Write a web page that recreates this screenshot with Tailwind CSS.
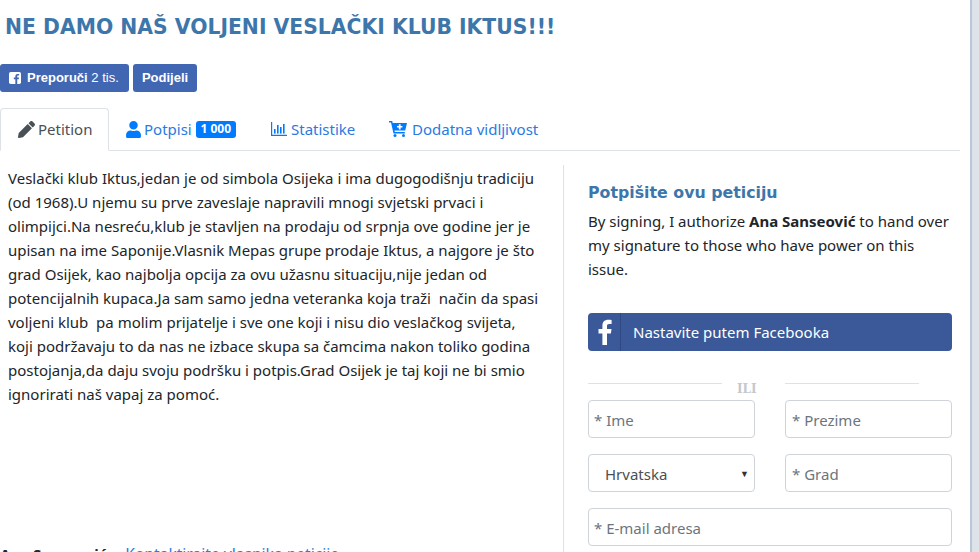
<!DOCTYPE html>
<html lang="hr">
<head>
    <meta charset="UTF-8">
    <meta name="viewport" content="width=device-width, initial-scale=1.0">
    <title>Ne damo naš voljeni veslački klub Iktus</title>
    <script src="https://cdn.jsdelivr.net/npm/@tailwindcss/browser@4"></script>
</head>
<body class="bg-white text-[#212529] font-['Noto_Sans',sans-serif] text-[15px] h-[552px] overflow-hidden flex">
    <div class="w-[972px] h-[552px] overflow-hidden border-r-2 border-[#b8c8d6] shrink-0">
        <h1 class="pt-[14px] pl-[5px] h-[64px] font-['DejaVu_Sans',sans-serif] font-bold text-[20.35px] leading-[26px] text-[#3d76aa]">NE DAMO NAŠ VOLJENI VESLAČKI KLUB IKTUS!!!</h1>

        <div class="flex gap-[4px] h-[28px]">
            <a class="flex items-center gap-[6px] w-[129px] pl-[9px] rounded-[3px] bg-[#4267b2] text-white font-['Liberation_Sans',sans-serif] text-[13px] font-bold">
                <svg class="w-[12px] h-[12px]" viewBox="0 0 14 14"><rect x="0" y="0" width="14" height="14" rx="2" fill="#fff"/><path d="M9.6 14V8.6h1.8l.3-2.1H9.6V5.2c0-.6.2-1 1-1h1.2V2.3c-.3 0-.9-.1-1.700-.1-1.600 0-2.700 1-2.700 2.800v1.500H5.600v2.100h1.800V14z" fill="#4267b2"/></svg>
                <span>Preporuči <span class="font-normal">2 tis.</span></span>
            </a>
            <a class="flex items-center justify-center w-[64px] rounded-[3px] bg-[#4267b2] text-white font-['Liberation_Sans',sans-serif] text-[13px] font-bold">Podijeli</a>
        </div>

        <div class="flex mt-[16px] h-[43px] w-[960px] border-b border-[#dee2e6] text-[15px]">
            <a class="flex items-center gap-[3px] w-[109px] h-[43px] pl-[17px] border border-[#dee2e6] border-b-white rounded-t-[4px] text-[#495057]">
                <svg class="w-[17px] h-[17px]" viewBox="0 0 512 512" fill="#495057"><path d="M497.900 142.100l-46.100 46.100c-4.700 4.700-12.300 4.700-17 0l-111-111c-4.700-4.700-4.700-12.300 0-17l46.100-46.100c18.700-18.700 49.100-18.700 67.900 0l60.100 60.100c18.800 18.700 18.800 49.100 0 67.900zM284.200 99.800L21.600 362.400.4 483.900c-2.900 16.400 11.400 30.600 27.800 27.800l121.500-21.300 262.600-262.600c4.700-4.700 4.700-12.300 0-17l-111-111c-4.800-4.700-12.400-4.700-17.100 0z"/></svg>
                <span>Petition</span>
            </a>
            <a class="flex items-center gap-[4px] pl-[17px] w-[145px] text-[#2a7ae2]">
                <svg class="w-[15px] h-[17px] -mr-[1px]" viewBox="0 0 448 512" fill="#007bff"><path d="M224 256c70.700 0 128-57.300 128-128S294.700 0 224 0 96 57.300 96 128s57.300 128 128 128zm89.600 32h-16.700c-22.200 10.200-46.900 16-72.900 16s-50.600-5.800-72.900-16h-16.700C60.200 288 0 348.200 0 422.400V464c0 26.500 21.500 48 48 48h352c26.500 0 48-21.500 48-48v-41.600c0-74.200-60.200-134.400-134.400-134.400z"/></svg>
                <span>Potpisi</span>
                <span class="h-[17px] w-[40px] flex items-center justify-center rounded-[3px] bg-[#007bff] text-white text-[12px] font-bold">1 000</span>
            </a>
            <a class="flex items-center gap-[4px] pl-[17px] w-[119px] text-[#2a7ae2]">
                <svg class="w-[16px] h-[14px]" viewBox="0 0 16 14" fill="#007bff"><path d="M0 0h1.200v12.800H16V14H0z"/><rect x="3" y="7" width="1.600" height="4.600"/><rect x="6" y="3" width="1.600" height="8.600"/><rect x="9" y="5" width="1.600" height="6.600"/><rect x="12" y="2" width="1.600" height="9.600"/></svg>
                <span>Statistike</span>
            </a>
            <a class="flex items-center gap-[5px] pl-[16px] text-[#2a7ae2]">
                <svg class="w-[18px] h-[16px]" viewBox="0 0 18 16" fill="#007bff"><path d="M0 0h3.200l.5 2H18l-1.800 7.500H5.500l.3 1.500h10v1.600H4.500L2 1.600H0z"/><circle cx="6" cy="14.500" r="1.500"/><circle cx="14.500" cy="14.500" r="1.500"/><path d="M9.800 3.200h1.800v1.800h1.800v1.600h-1.800v1.800H9.800V6.600H8V5h1.800z" fill="#fff"/></svg>
                <span>Dodatna vidljivost</span>
            </a>
        </div>

        <div class="flex mt-[14px] h-[387px]">
            <div class="w-[563px] shrink-0 pt-[1px] flex flex-col">
                <p class="pl-[8px] w-[550px] leading-[24px] text-[15px] whitespace-pre-wrap">Veslački klub Iktus,jedan je od simbola Osijeka i ima dugogodišnju tradiciju
(od 1968).U njemu su prve zaveslaje napravili mnogi svjetski prvaci i
olimpijci.Na nesreću,klub je stavljen na prodaju od srpnja ove godine jer je
upisan na ime Saponije.Vlasnik Mepas grupe prodaje Iktus, a najgore je što
grad Osijek, kao najbolja opcija za ovu užasnu situaciju,nije jedan od
potencijalnih kupaca.Ja sam samo jedna veteranka koja traži  način da spasi
voljeni klub  pa molim prijatelje i sve one koji i nisu dio veslačkog svijeta,
koji podržavaju to da nas ne izbace skupa sa čamcima nakon toliko godina
postojanja,da daju svoju podršku i potpis.Grad Osijek je taj koji ne bi smio
ignorirati naš vapaj za pomoć.</p>
                <p class="mt-[136px] whitespace-nowrap leading-[24px]"><b>Ana Sanseović</b> <a class="ml-[15px] text-[15.6px] text-[#2a7ae2]">Kontaktirajte vlasnika peticije</a></p>
            </div>
            <div class="w-[397px] border-l border-[#dee2e6] pt-[15px] pl-[24px] pr-[8px]">
                <h2 class="font-['DejaVu_Sans',sans-serif] font-bold text-[15.8px] leading-[26px] text-[#3d76aa]">Potpišite ovu peticiju</h2>
                <p class="mt-[3px] leading-[24px] text-[15px]">By signing, I authorize <b>Ana Sanseović</b> to hand over my signature to those who have power on this issue.</p>
                <a class="mt-[32px] flex h-[38px] rounded-[4px] bg-[#3b5998] text-white">
                    <span class="w-[33px] flex items-center justify-center border-r border-[#2f4a82]">
                        <svg class="w-[15px] h-[26px]" viewBox="0 0 15 26" fill="#fff"><path d="M10 26V14.500h3.900l.6-4.500H10V7.200c0-1.300.4-2.200 2.200-2.200h2.400V1c-.4-.1-1.800-.2-3.400-.2C7.800.8 5.400 2.900 5.400 6.700V10H1.500v4.500h3.900V26z"/></svg>
                    </span>
                    <span class="pl-[12px] flex items-center text-[15px]">Nastavite putem Facebooka</span>
                </a>
                <div class="mt-[32px] flex h-[17px] w-[331px]">
                    <span class="w-[134px] h-px bg-[#dee2e6]"></span>
                    <span class="w-[63px] -mt-[2px] pl-[15px] text-left font-['DejaVu_Serif',serif] font-bold text-[12px] leading-[16px] text-[#c4c8cc]">ILI</span>
                    <span class="w-[134px] h-px bg-[#dee2e6]"></span>
                </div>
                <div class="grid grid-cols-2 gap-x-[30px] gap-y-[16px]">
                    <div class="h-[38px] flex items-center pt-[2px] pl-[5px] border border-[#ced4da] rounded-[4px] text-[#6c757d]">* Ime</div>
                    <div class="h-[38px] flex items-center pt-[2px] pl-[6px] border border-[#ced4da] rounded-[4px] text-[#6c757d]">* Prezime</div>
                    <div class="h-[38px] flex items-center justify-between pt-[2px] pl-[16px] pr-[5px] border border-[#ced4da] rounded-[4px] text-[#495057]"><span>Hrvatska</span><span class="text-[9px] text-[#333]">▼</span></div>
                    <div class="h-[38px] flex items-center pt-[2px] pl-[6px] border border-[#ced4da] rounded-[4px] text-[#6c757d]">* Grad</div>
                    <div class="col-span-2 h-[38px] flex items-center pt-[2px] pl-[5px] border border-[#ced4da] rounded-[4px] text-[#6c757d]">* E-mail adresa</div>
                </div>
            </div>
        </div>
    </div>
    <div class="flex-1 bg-[#dde3e8]"></div>
</body>
</html>
